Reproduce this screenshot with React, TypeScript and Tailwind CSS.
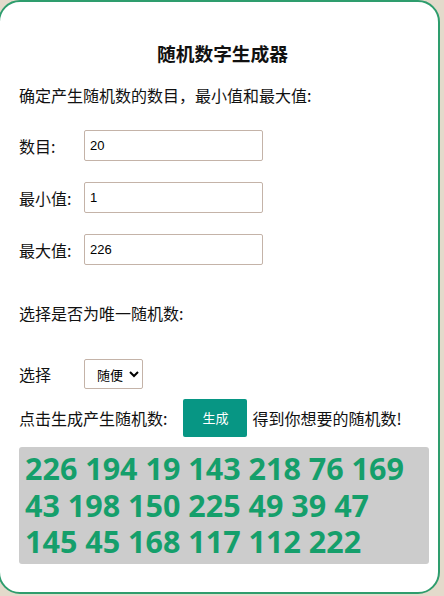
import { useState } from 'react'

const NUMS = [226, 194, 19, 143, 218, 76, 169, 43, 198, 150, 225, 49, 39, 47, 145, 45, 168, 117, 112, 222]

const cjk = "font-['Microsoft_YaHei','Noto_Sans_CJK_SC',sans-serif]"

function Field({ label, value, mt }: { label: string; value: string; mt: string }) {
  return (
    <div className={`flex items-center ${mt}`}>
      <span className="w-[65px] text-[16px] text-[#111]">{label}</span>
      <input
        defaultValue={value}
        className="w-[179px] h-[31px] border border-[#c4b3a8] rounded-[2px] px-[5px] text-[13px] text-black font-['Liberation_Sans',sans-serif] outline-none"
      />
    </div>
  )
}

export default function App() {
  const [mode, setMode] = useState('随便')

  return (
    <div className={`w-[444px] h-[596px] bg-[#e3dacb] overflow-hidden ${cjk}`}>
      <div className="w-[442px] h-[594px] -ml-[2px] bg-white border-2 border-[#2e9d6d] rounded-[22px] pl-[19px] pr-[10px] pt-[36px]">
        <h1 className="text-center text-[18.72px] font-bold text-[#111] leading-[30px] pr-[2px]">随机数字生成器</h1>
        <p className="mt-[15px] text-[16px] text-[#111] leading-[24px]">确定产生随机数的数目，最小值和最大值:</p>

        <Field label="数目:" value="20" mt="mt-[23px]" />
        <Field label="最小值:" value="1" mt="mt-[21px]" />
        <Field label="最大值:" value="226" mt="mt-[21px]" />

        <p className="mt-[36px] text-[16px] text-[#111] leading-[24px]">选择是否为唯一随机数:</p>

        <div className="flex items-center mt-[34px]">
          <span className="w-[65px] text-[16px] text-[#111]">选择</span>
          <select
            value={mode}
            onChange={(e) => setMode(e.target.value)}
            className="h-[30px] w-[59px] border border-[#c4b3a8] rounded-[2px] pl-[8px] text-[13px] text-black bg-white"
          >
            <option>随便</option>
            <option>唯一</option>
          </select>
        </div>

        <div className="flex items-center mt-[10px]">
          <span className="text-[16px] text-[#111]">点击生成产生随机数:</span>
          <button className="ml-[16px] w-[64px] h-[38px] bg-[#079684] text-white text-[13px] rounded-[2px]">生成</button>
          <span className="ml-[5px] text-[16px] text-[#111]">得到你想要的随机数!</span>
        </div>

        <div className="mt-[10px] w-[410px] h-[117px] bg-[#cccccc] rounded-[3px] px-[6px] pt-[3px]">
          <p className="font-['Open_Sans',sans-serif] font-bold text-[30.5px] leading-[36.5px] text-[#159f6b]">
            {NUMS.join(' ')}
          </p>
        </div>
      </div>
    </div>
  )
}
